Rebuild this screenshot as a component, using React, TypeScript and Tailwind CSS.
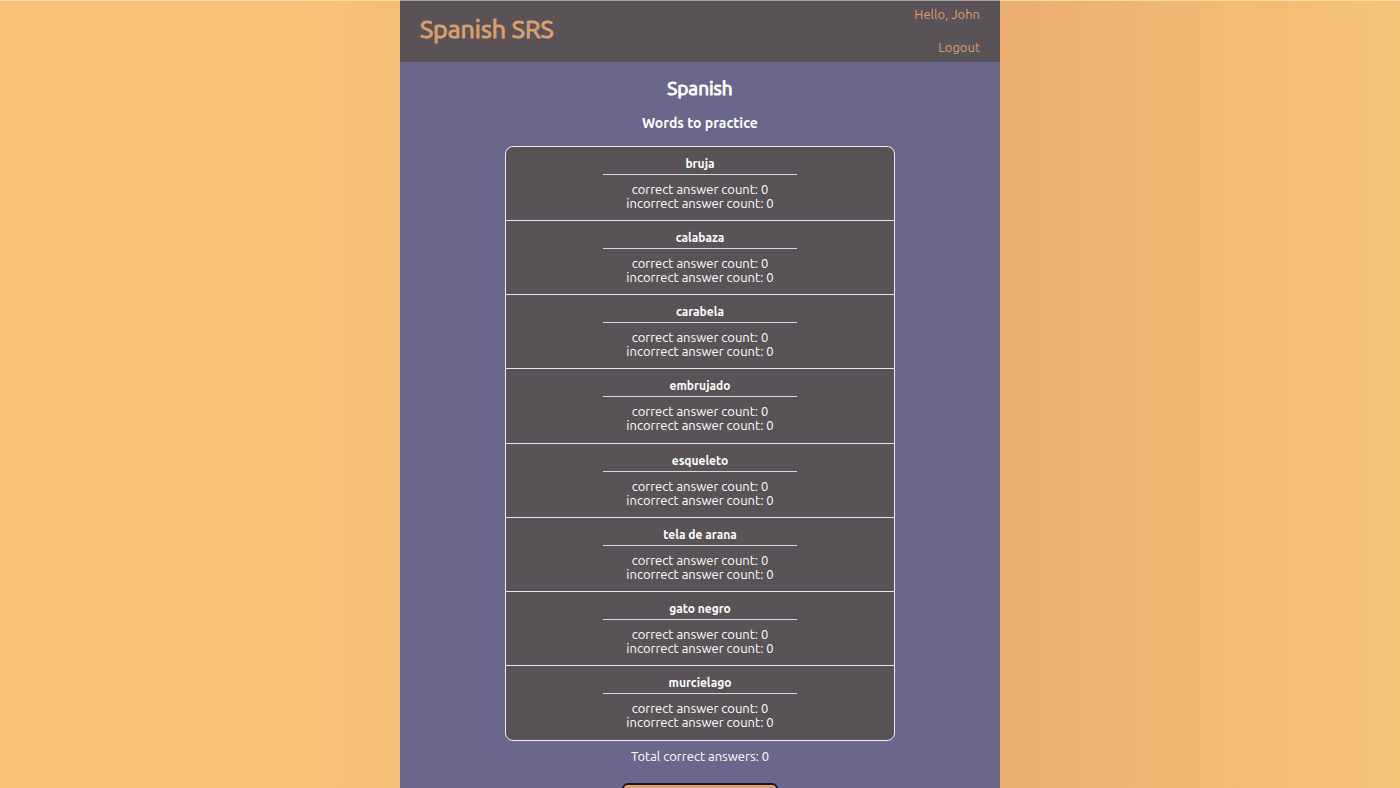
const words = [
  "bruja",
  "calabaza",
  "carabela",
  "embrujado",
  "esqueleto",
  "tela de arana",
  "gato negro",
  "murcielago",
];

function Header() {
  return (
    <header className="flex justify-between border-t border-[#aaa6a8] bg-[#595358] px-5 text-[#dc9f6e]">
      <h1 className="pt-2 text-[25px] leading-10 font-normal [-webkit-text-stroke:1px]">
        Spanish SRS
      </h1>
      <nav className="flex flex-col items-end gap-[17px] pt-[5px] pb-[7px] text-[13px] leading-4">
        <span>Hello, John</span>
        <a href="#logout">Logout</a>
      </nav>
    </header>
  );
}

function WordItem({ word }: { word: string }) {
  return (
    <li className="flex flex-col items-center border-b border-[#e6e3ea] py-2 last:border-b-0">
      <h4 className="w-1/2 border-b border-[#d8d4da] pt-px pb-0.5 text-[12px] leading-4 font-semibold">
        {word}
      </h4>
      <p className="mt-[7px] leading-[14px]">correct answer count: 0</p>
      <p className="leading-[14px]">incorrect answer count: 0</p>
    </li>
  );
}

export default function App() {
  return (
    <div className="h-screen overflow-hidden bg-[linear-gradient(to_right,#f7c477_0%,#f6c377_22%,#f3be74_29%,#e9ac6f_65%,#eaae6f_72%,#f0ba73_86%,#f5c477_100%)] font-['Ubuntu','Noto_Sans',sans-serif]">
      <div className="border-t border-[#fadba5]">
        <div className="mx-auto -mt-px min-h-screen w-full max-w-[600px] bg-[#6b668b] text-white">
          <Header />
          <main className="flex flex-col items-center pt-3 text-center text-[13px]">
            <h2 className="text-[19px] leading-7 font-normal [-webkit-text-stroke:1px]">
              Spanish
            </h2>
            <h3 className="mt-[11px] text-[14px] leading-5 font-semibold">
              Words to practice
            </h3>
            <ul className="mt-[13px] grid min-h-[595px] w-[65%] auto-rows-fr rounded-lg border border-[#efedf3] bg-[#595358]">
              {words.map((word) => (
                <WordItem key={word} word={word} />
              ))}
            </ul>
            <p className="mt-[7px] leading-4">Total correct answers: 0</p>
            <button
              type="button"
              className="mt-[19px] h-10 w-[156px] rounded-md border-2 border-[#1c1526] bg-[#dc9f6e] font-medium text-[#1c1526]"
              aria-label="Start practicing"
            />
          </main>
        </div>
      </div>
    </div>
  );
}
